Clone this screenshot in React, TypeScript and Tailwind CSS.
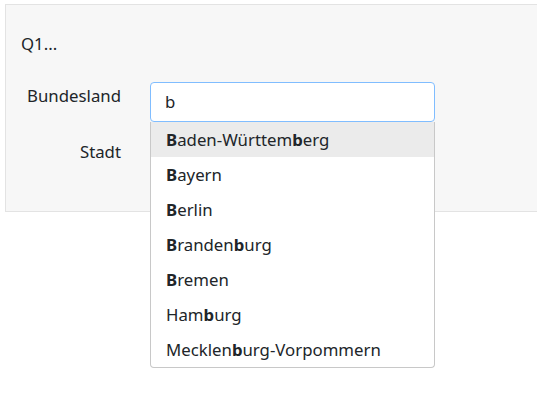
import React from "react";

const items: { parts: [string, boolean][] }[] = [
  { parts: [["B", true], ["aden-Württem", false], ["b", true], ["erg", false]] },
  { parts: [["B", true], ["ayern", false]] },
  { parts: [["B", true], ["erlin", false]] },
  { parts: [["B", true], ["randen", false], ["b", true], ["urg", false]] },
  { parts: [["B", true], ["remen", false]] },
  { parts: [["Ham", false], ["b", true], ["urg", false]] },
  { parts: [["Mecklen", false], ["b", true], ["urg-Vorpommern", false]] },
];

export default function App() {
  return (
    <div
      className="w-[537px] h-[417px] overflow-hidden bg-white pt-[4px] pl-[5px] text-[#212529] text-[16.8px]"
      style={{ fontFamily: '"Noto Sans", "Open Sans", sans-serif' }}
    >
      <div className="w-[600px] border border-[#e3e3e3] bg-[#f7f7f7] pl-[15px] pt-[27px] pb-[33px]">
        <div className="leading-[24px]">Q1...</div>
        <div className="mt-[26px] flex flex-col gap-[16px]">
          <div className="relative flex">
            <label className="w-[100px] mr-[29px] text-right leading-[24px] pt-[2px]">Bundesland</label>
            <div className="relative">
              <div className="w-[285px] h-[40px] rounded-[4px] border border-[#80bdff] bg-white pl-[14px] flex items-center leading-[24px]">
                b
              </div>
              <div className="absolute left-0 top-[40px] z-10 w-[285px] rounded-b-[4px] border border-t-0 border-[#c8c8c8] bg-white">
                {items.map((it, i) => (
                  <div
                    key={i}
                    className={`h-[35px] flex items-center pl-[15px] leading-[24px] ${i === 0 ? "bg-[#ebebeb]" : ""}`}
                  >
                    <span>
                      {it.parts.map(([t, b], j) =>
                        b ? (
                          <strong key={j} className="font-bold">{t}</strong>
                        ) : (
                          <span key={j}>{t}</span>
                        )
                      )}
                    </span>
                  </div>
                ))}
              </div>
            </div>
          </div>
          <div className="flex">
            <label className="w-[100px] mr-[29px] text-right leading-[24px] pt-[2px]">Stadt</label>
            <div className="w-[285px] h-[40px] rounded-[4px] border border-[#ced4da] bg-white" />
          </div>
        </div>
      </div>
    </div>
  );
}
